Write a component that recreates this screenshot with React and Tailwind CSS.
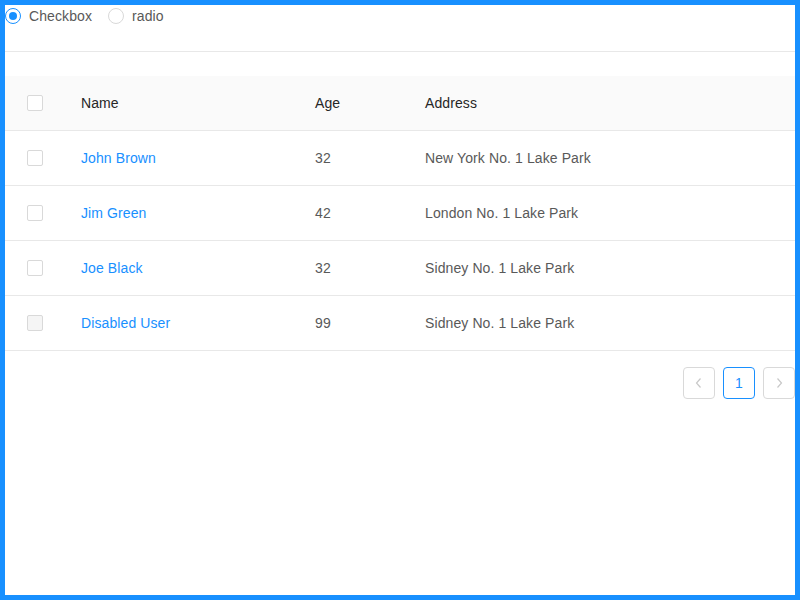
import React from 'react';

const rows = [
  { name: 'John Brown', age: 32, address: 'New York No. 1 Lake Park' },
  { name: 'Jim Green', age: 42, address: 'London No. 1 Lake Park' },
  { name: 'Joe Black', age: 32, address: 'Sidney No. 1 Lake Park' },
  { name: 'Disabled User', age: 99, address: 'Sidney No. 1 Lake Park', disabled: true },
];

function Box({ disabled }) {
  return (
    <span
      className={
        'block w-4 h-4 rounded-[2px] border border-[#d9d9d9] ' +
        (disabled ? 'bg-[#f5f5f5]' : 'bg-white')
      }
    />
  );
}

function Radio({ checked, label }) {
  return (
    <label className="flex items-center h-[22px] mr-2">
      <span
        className={
          'w-4 h-4 rounded-full border flex items-center justify-center bg-white ' +
          (checked ? 'border-[#1890ff]' : 'border-[#d9d9d9]')
        }
      >
        {checked && <span className="w-2 h-2 rounded-full bg-[#1890ff]" />}
      </span>
      <span className="px-2 text-[#595959] tracking-[0.1px]">{label}</span>
    </label>
  );
}

const cols = 'grid grid-cols-[60px_234px_110px_1fr] items-center';

export default function App() {
  return (
    <div
      className="w-[800px] h-[600px] border-[5px] border-[#1890ff] bg-white text-sm overflow-hidden"
      style={{ fontFamily: '"Liberation Sans", Arial, sans-serif' }}
    >
      <div className="flex">
        <Radio checked label="Checkbox" />
        <Radio label="radio" />
      </div>

      <div className="h-px bg-[#e8e8e8] my-6" />

      <div className="tracking-[0.1px]">
        <div className={cols + ' h-[55px] bg-[#fafafa] border-b border-[#e8e8e8] text-[#262626]'}>
          <div className="flex justify-center pr-[1px]"><Box /></div>
          <div className="px-4">Name</div>
          <div className="px-4">Age</div>
          <div className="px-4">Address</div>
        </div>
        {rows.map((r) => (
          <div key={r.name} className={cols + ' h-[55px] border-b border-[#e8e8e8] text-[#595959]'}>
            <div className="flex justify-center pr-[1px]"><Box disabled={r.disabled} /></div>
            <div className="px-4 text-[#1890ff]">{r.name}</div>
            <div className="px-4">{r.age}</div>
            <div className="px-4">{r.address}</div>
          </div>
        ))}
      </div>

      <div className="flex justify-end gap-2 mt-4">
        <button className="w-8 h-8 rounded border border-[#d9d9d9] flex items-center justify-center">
          <svg width="12" height="12" viewBox="0 0 12 12" fill="none" stroke="#c8c8c8" strokeWidth="1.2">
            <path d="M7.5 1.5 L3.5 6 L7.5 10.5" />
          </svg>
        </button>
        <button className="w-8 h-8 rounded border border-[#1890ff] text-[#1890ff] flex items-center justify-center">
          1
        </button>
        <button className="w-8 h-8 rounded border border-[#d9d9d9] flex items-center justify-center">
          <svg width="12" height="12" viewBox="0 0 12 12" fill="none" stroke="#c8c8c8" strokeWidth="1.2">
            <path d="M4.5 1.5 L8.5 6 L4.5 10.5" />
          </svg>
        </button>
      </div>
    </div>
  );
}
